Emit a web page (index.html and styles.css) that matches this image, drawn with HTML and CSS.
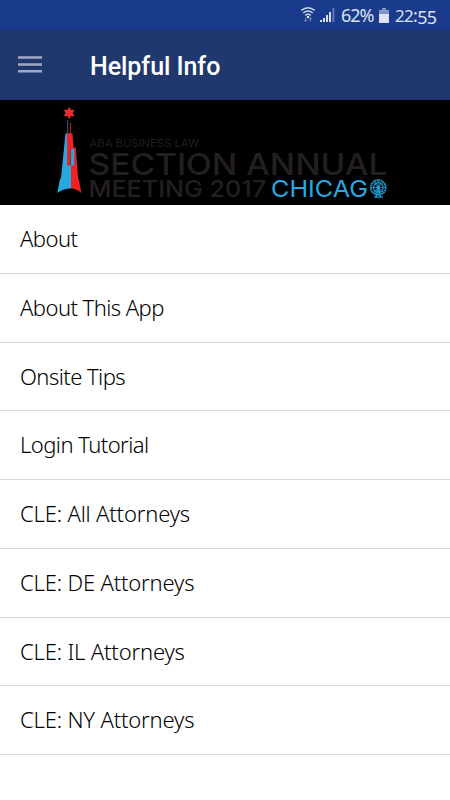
FILE: index.html
```html
<!DOCTYPE html>
<html lang="en">
<head>
<meta charset="utf-8">
<title>Helpful Info</title>
<link rel="stylesheet" href="styles.css">
</head>
<body>
<div class="status">
  <svg class="signals" width="36" height="18" viewBox="0 0 36 18" fill="none" stroke="#cbd4ed" stroke-width="1.4">
    <path d="M1.3 4.4Q8 -1 14.7 4.4M3.2 7Q8 2.8 12.8 7M5.2 9.4Q8 7.2 10.8 9.4"/>
    <circle cx="8" cy="11" r="1.3" fill="#e0e6f8" stroke="none"/>
    <path d="M5.6 11.500v4M4 13.700l1.6 1.8 1.6-1.8M10.4 15.500v-4M8.8 13.300l1.6-1.8 1.6 1.8" stroke="#7187c2" stroke-width="1"/>
    <g fill="#d5ddf2" stroke="none"><path d="M20 14h2v2h-2zM23 12h2v4h-2zM26 9h2v7h-2zM29 6h2v10h-2z"/><path d="M32.4 2h2v14h-2z" fill="#6078b9"/></g>
  </svg>
  <span class="percent">62%</span>
  <svg class="battery" width="10" height="15" viewBox="0 0 10 15"><path d="M3 0h4v2h3v4H0V2h3z" fill="#8294c8"/><path d="M0 6h10v9H0z" fill="#dce2f4"/></svg>
  <span class="time"><span class="two">22</span>:<span class="low">55</span></span>
</div>
<header class="bar">
  <svg class="menu" width="24" height="18" viewBox="0 0 24 18" fill="#a0a9c5"><path d="M0 0.3h24v2.4H0zM0 7.3h24v2.4H0zM0 14.1h24v2.4H0z"/></svg>
  <h1>Helpful Info</h1>
</header>
<div class="banner">
  <svg width="450" height="105" viewBox="0 0 450 105">
    <path d="M69.200 6.700L70.900 10 74.700 9.800 72.700 13 74.700 16.200 70.900 16 69.200 19.300 67.500 16 63.700 16.200 65.700 13 63.700 9.800 67.500 10z" fill="#ef2b31"/>
    <path d="M67.600 20v14" stroke="#1f5068" stroke-width="1.200"/>
    <path d="M70.500 23v11" stroke="#a81d22" stroke-width="1.200"/>
    <path d="M65.500 33.500H71V88.500Q63 88.500 57.300 93L60 79 61 78z" fill="#27a9e0"/>
    <path d="M67 33.500H72.500L73.500 47.500H75.700L78.200 79 79 80 81.300 93Q76.500 88.500 71 88.500V65.500H67z" fill="#ef2026"/>
    <path d="M71 49h3.200v16.500H71z" fill="#27a9e0"/>
    <path d="M70.600 48v17" stroke="#7d3035" stroke-width=".8"/>
    <g class="wordmark">
      <text class="small" x="89.500" y="47" textLength="109.500" lengthAdjust="spacingAndGlyphs">ABA BUSINESS LAW</text>
      <text class="large" x="88.500" y="74.900" textLength="299" lengthAdjust="spacingAndGlyphs">SECTION ANNUAL</text>
      <text class="medium" x="88.500" y="97" textLength="177.500" lengthAdjust="spacingAndGlyphs">MEETING 2017</text>
      <text class="city" x="271" y="97.300" textLength="97" lengthAdjust="spacingAndGlyphs">CHICAG</text>
    </g>
    <g fill="none" stroke="#1e9bd0">
      <circle cx="378.300" cy="87.500" r="7.400" stroke-width="1.900" stroke-dasharray="1.700 .5"/>
      <circle cx="378.300" cy="87.500" r="4.800" stroke-width="1.200"/>
      <path d="M371 87.500h14.600M378.300 80v15M373 82.300l10.600 10.400M383.600 82.300L373 92.700M375 81l6.600 13M381.600 81L375 94" stroke-width=".8"/>
      <circle cx="378.300" cy="87.500" r="1.700" fill="#27a9e0" stroke="none"/>
      <path d="M378 89l-2 8M378.600 89l2 8M374 97.200h9" stroke-width="1.300"/>
    </g>
  </svg>
</div>
<ul class="list">
  <li class="tight">About</li>
  <li class="tight">About This App</li>
  <li class="tight">Onsite Tips</li>
  <li class="tight">Login Tutorial</li>
  <li>CLE: All Attorneys</li>
  <li>CLE: DE Attorneys</li>
  <li>CLE: IL Attorneys</li>
  <li>CLE: NY Attorneys</li>
</ul>
</body>
</html>
```
FILE: styles.css
```css
* { box-sizing: border-box; }
body { margin: 0; width: 450px; height: 800px; overflow: hidden; background: #fff; font-family: "Noto Sans", sans-serif; }
.status { height: 30px; background: #1a3a8b; display: flex; align-items: center; padding-left: 300px; color: #dce2f4; font-size: 18px; line-height: 30px; }
.signals { flex: none; }
.percent { width: 33px; margin-left: 5px; letter-spacing: -1px; white-space: nowrap; }
.battery { flex: none; margin-left: 5px; }
.time { margin-left: 6px; letter-spacing: -.7px; white-space: nowrap; }
.two { font-size: 17px; }
.low { position: relative; top: 2px; }
.bar { height: 70px; background: #21386f; display: flex; align-items: center; padding-left: 18px; }
.menu { flex: none; }
.bar h1 { margin: 3px 0 0 48px; color: #fff; font: 500 25px/32px Roboto, sans-serif; letter-spacing: -.05px; }
.banner { height: 105px; background: #000; }
.banner svg { display: block; }
.wordmark { font-family: Inter, Lato, sans-serif; fill: #231f20; }
.small { font-size: 10.500px; }
.large { font-size: 30.500px; font-weight: 500; }
.medium { font-size: 23px; font-weight: 500; }
.city { font-size: 23.500px; font-weight: 400; fill: #27a9e0; }
.list { margin: 0; padding: 0; list-style: none; }
.list li { height: 68.750px; padding: 0 20px; border-bottom: 1px solid #d8d8d8; color: #000; font-size: 22px; font-weight: 300; line-height: 66.500px; letter-spacing: -.17px; }
.list .tight { letter-spacing: -.55px; }
```
